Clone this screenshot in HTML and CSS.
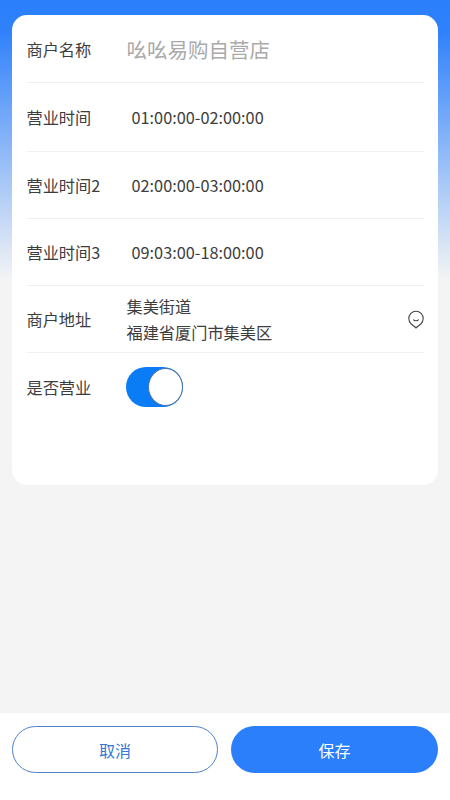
FILE: index.html
```html
<!DOCTYPE html>
<html lang="zh-CN">
<head>
    <meta charset="UTF-8">
    <meta name="viewport" content="width=device-width, initial-scale=1.0">
    <title>商户信息</title>
    <link rel="stylesheet" href="styles.css">
</head>
<body>
    <div class="page">
        <div class="form-card">
            <div class="form-row row-name">
                <span class="row-label">商户名称</span>
                <span class="shop-name">吆吆易购自营店</span>
            </div>
            <div class="form-row row-time">
                <span class="row-label">营业时间</span>
                <span class="time-value">01:00:00-02:00:00</span>
            </div>
            <div class="form-row row-time">
                <span class="row-label">营业时间2</span>
                <span class="time-value">02:00:00-03:00:00</span>
            </div>
            <div class="form-row row-time">
                <span class="row-label">营业时间3</span>
                <span class="time-value">09:03:00-18:00:00</span>
            </div>
            <div class="form-row row-address">
                <span class="row-label">商户地址</span>
                <div class="address-text">
                    <div>集美街道</div>
                    <div>福建省厦门市集美区</div>
                </div>
                <svg class="pin-icon" viewBox="0 0 16 20" width="16" height="20" fill="none" stroke="#444" stroke-width="1.1">
                    <path d="M8 19 C7 17.600 5 16.600 3.200 15 C1.600 13.600 .8 11.800 .8 9.600 C.8 5.400 4 2.200 8 2.200 C12 2.200 15.200 5.400 15.200 9.600 C15.200 11.800 14.400 13.600 12.800 15 C11 16.600 9 17.600 8 19 Z"/>
                    <path d="M5.400 10.600 C6.200 12.200 9.800 12.200 10.600 10.600"/>
                </svg>
            </div>
            <div class="form-row row-switch">
                <span class="row-label">是否营业</span>
                <div class="switch">
                    <div class="switch-knob"></div>
                </div>
            </div>
        </div>
        <div class="footer-bar">
            <button class="footer-btn btn-cancel">取消</button>
            <button class="footer-btn btn-save">保存</button>
        </div>
    </div>
</body>
</html>
```

FILE: styles.css
```css
* {
    box-sizing: border-box;
}
html, body {
    margin: 0;
    padding: 0;
}
body {
    font-family: "Noto Sans CJK SC", "Noto Sans", sans-serif;
    color: #3d3d3d;
}
.page {
    width: 450px;
    height: 800px;
    display: flex;
    flex-direction: column;
    background: linear-gradient(180deg, #2b7ffb 0, #2f81fb 30px, #f4f4f4 280px);
    padding-top: 15px;
}
.form-card {
    margin: 0 12px;
    height: 470px;
    padding: 0 14px 0 15px;
    background: #fff;
    border-radius: 15px;
}
.form-row {
    display: flex;
    align-items: center;
    border-bottom: 1px solid #f0f0f0;
}
.row-label {
    width: 99px;
    flex-shrink: 0;
    margin-left: -0.5px;
    font-size: 16.2px;
    line-height: 24px;
}
.row-name {
    height: 68px;
}
.shop-name {
    margin-left: 1px;
    font-size: 20.5px;
    line-height: 30px;
    color: #aaa;
}
.row-time {
    height: 67px;
}
.row-time:nth-child(2) {
    height: 69px;
}
.time-value {
    margin-left: 6px;
    font-size: 16.3px;
}
.row-address {
    height: 67px;
}
.address-text {
    flex: 1;
    margin-left: 1px;
    font-size: 16.2px;
    line-height: 26px;
}
.row-switch {
    height: 68px;
    border-bottom: none;
}
.switch {
    width: 57px;
    height: 40px;
    padding: 1px 0;
    background: #0a7cf6;
    border-radius: 20px;
    display: flex;
    justify-content: flex-end;
}
.switch-knob {
    width: 35px;
    height: 38px;
    background: #fff;
    border: 1px solid #4a72a8;
    border-radius: 50%;
}
.footer-bar {
    margin-top: auto;
    height: 87px;
    padding: 13px 12px 0;
    display: flex;
    gap: 13px;
    background: #fff;
}
.footer-btn {
    height: 47px;
    font-family: inherit;
    font-size: 16px;
    border-radius: 24px;
}
.btn-cancel {
    flex: 0 0 206px;
    background: #fff;
    border: 1px solid #4f81c9;
    color: #3577d8;
}
.btn-save {
    flex: 1;
    background: #2b7ffb;
    border: none;
    color: #fff;
}
```
